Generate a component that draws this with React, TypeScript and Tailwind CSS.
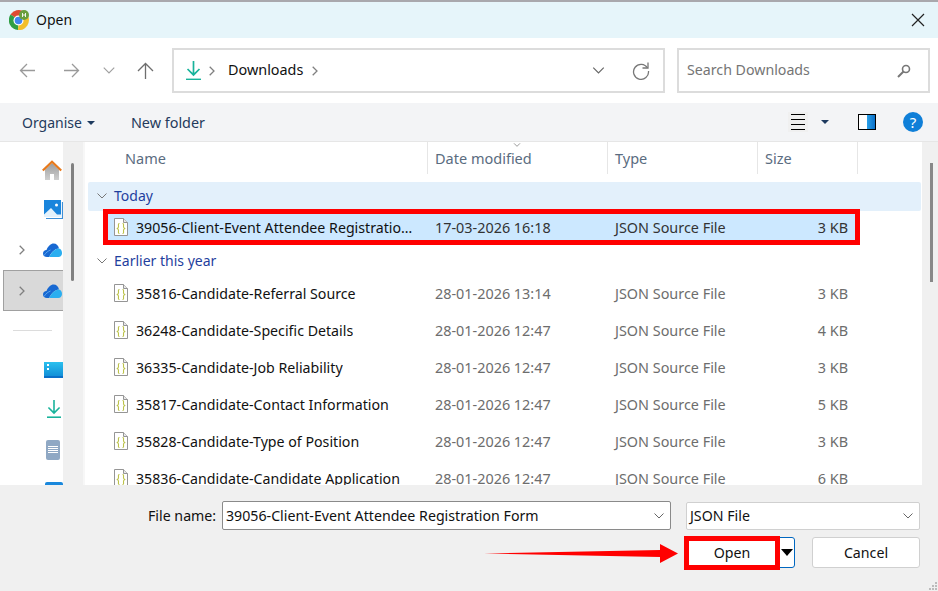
const files = [
  { name: '35816-Candidate-Referral Source', date: '28-01-2026 13:14', size: '3 KB' },
  { name: '36248-Candidate-Specific Details', date: '28-01-2026 12:47', size: '4 KB' },
  { name: '36335-Candidate-Job Reliability', date: '28-01-2026 12:47', size: '3 KB' },
  { name: '35817-Candidate-Contact Information', date: '28-01-2026 12:47', size: '5 KB' },
  { name: '35828-Candidate-Type of Position', date: '28-01-2026 12:47', size: '3 KB' },
  { name: '35836-Candidate-Candidate Application', date: '28-01-2026 12:47', size: '6 KB' },
]

const FileIcon = () => (
  <svg width="14" height="18" viewBox="0 0 14 18" className="shrink-0">
    <path d="M.5.5h9l4 4v13H.5z" fill="#fff" stroke="#959595" />
    <path d="M9.500.5v4h4" fill="#e8e8e8" stroke="#959595" />
    <path d="M5.500 5.500C4 5.500 4.500 7 4.500 8.500S4 10 3.300 10.500c.7.500 1.200.5 1.200 2s-.5 3 1 3M8.500 5.500c1.500 0 1 1.500 1 3s.5 1.500 1.200 2c-.7.500-1.200.5-1.200 2s.5 3-1 3" fill="none" stroke="#bcc24a" strokeWidth="1.100" />
  </svg>
)

const Chevron = ({ className }: { className: string }) => (
  <svg width="10" height="6" viewBox="0 0 10 6" className={className}>
    <path d="M.5.5 5 5 9.500.5" fill="none" stroke="currentColor" />
  </svg>
)

const ChevronRight = () => (
  <svg width="6" height="10" viewBox="0 0 6 10" className="text-[#808080]">
    <path d="M.7.7 5 5 .7 9.300" fill="none" stroke="currentColor" strokeWidth="1.300" />
  </svg>
)

const DownloadIcon = ({ size }: { size: number }) => (
  <svg width={size} height={size * 1.33} viewBox="0 0 15 20">
    <path d="M7.500 0v13M1.500 8l6 6 6-6" fill="none" stroke="#18b39b" strokeWidth="1.700" />
    <path d="M0 18.500h15" stroke="#18b39b" strokeWidth="1.700" />
  </svg>
)

const OneDrive = () => (
  <svg width="19" height="14" viewBox="0 0 19 14" className="shrink-0">
    <path d="M4 14C1.500 14 0 12.500 0 10.500 0 8.500 1.500 7 3.500 7 5 3 8 .5 10.500.5c3 0 5 2 5.500 5-4 0-7.500 4-10 8.500z" fill="#1768d2" />
    <path d="M6 14c2.500-4.500 6-8.500 10-8.500 1.800.300 3 2.500 3 4.500 0 2.300-1.500 4-3.500 4z" fill="#2aaef0" />
    <path d="M1 12.500C3 9.500 5 8 7.500 7" stroke="#6db5f2" strokeWidth=".8" fill="none" />
  </svg>
)

const ChromeIcon = () => (
  <svg width="20" height="20" viewBox="0 0 20 20" className="shrink-0">
    <path d="M10 10 1.500 4.500A10 10 0 0 1 18.500 5z" fill="#df4a32" />
    <path d="M10 10 1.500 4.500A10 10 0 0 0 9 20z" fill="#2f9e44" />
    <path d="M10 10 9 20A10 10 0 0 0 18.500 5z" fill="#f3bf2a" />
    <circle cx="9.500" cy="10.500" r="5" fill="#fff" />
    <circle cx="9.500" cy="10.500" r="3.800" fill="#3f86ee" />
    <circle cx="15" cy="5" r="5" fill="#6a9f3c" />
    <path d="M13.500 3v4M16.500 3v4M13.500 5h3" stroke="#fff" strokeWidth=".9" fill="none" />
  </svg>
)

export default function App() {
  return (
    <div className="relative flex h-[591px] w-[938px] flex-col overflow-hidden bg-white text-[14.2px] text-[#111] font-['Noto_Sans','Open_Sans',sans-serif]">
      {/* title bar */}
      <div className="flex h-[38px] shrink-0 items-center border-t-2 border-[#a9a8ad] bg-[#e6f5fa] pl-[9px] pr-[13px]">
        <ChromeIcon />
        <span className="ml-[7px] flex-1 text-[14px] leading-none">Open</span>
        <svg width="14" height="14" viewBox="0 0 14 14">
          <path d="M1 1l12 12M13 1 1 13" stroke="#222" strokeWidth="1.200" />
        </svg>
      </div>

      {/* nav bar */}
      <div className="flex h-[65px] shrink-0 items-center pl-[19px] pr-[8px]">
        <svg width="17" height="15" viewBox="0 0 17 15" className="text-[#9a9a9a]">
          <path d="M16 7.500H1.500M8 1 1.500 7.500 8 14" fill="none" stroke="currentColor" strokeWidth="1.300" />
        </svg>
        <svg width="17" height="15" viewBox="0 0 17 15" className="ml-[27px] text-[#9a9a9a]">
          <path d="M1 7.500h14.500M9 1l6.500 6.500L9 14" fill="none" stroke="currentColor" strokeWidth="1.300" />
        </svg>
        <Chevron className="ml-[23px] h-[7px] w-[12px] text-[#a0a0a0]" />
        <svg width="17" height="17" viewBox="0 0 17 17" className="ml-[22px] text-[#6e6e6e]">
          <path d="M8.500 17V1.500M1 9l7.500-7.500L16 9" fill="none" stroke="currentColor" strokeWidth="1.300" />
        </svg>
        <div className="ml-[18px] flex h-[45px] w-[493px] items-center border-2 border-[#dcdcdc] pl-[12px] pr-[13px]">
          <DownloadIcon size={15} />
          <span className="ml-[8px] text-[#777]"><ChevronRight /></span>
          <span className="ml-[13px] text-[14.4px] leading-none">Downloads</span>
          <span className="ml-[9px]"><ChevronRight /></span>
          <Chevron className="ml-auto h-[7px] w-[13px] text-[#666]" />
          <svg width="18" height="18" viewBox="0 0 18 18" className="ml-[27px] text-[#777]">
            <path d="M15.500 6A7.500 7.500 0 1 0 16.500 9" fill="none" stroke="currentColor" strokeWidth="1.300" />
            <path d="M16 .5v5.500h-5.500" fill="none" stroke="currentColor" strokeWidth="1.300" />
          </svg>
        </div>
        <div className="ml-[12px] flex h-[45px] w-[253px] items-center border-2 border-[#dcdcdc] pl-[8px] pr-[17px]">
          <span className="flex-1 text-[14.2px] leading-none text-[#757575]">Search Downloads</span>
          <svg width="14" height="14" viewBox="0 0 14 14">
            <circle cx="9" cy="5" r="3.500" fill="none" stroke="#777" strokeWidth="1.600" />
            <path d="M6.500 7.500 1 13" stroke="#777" strokeWidth="2" />
          </svg>
        </div>
      </div>

      {/* toolbar */}
      <div className="flex h-[39px] shrink-0 items-center border-b border-[#e6e6e6] bg-[#f3f4f6] pl-[22px] pr-[15px] pt-[2px] text-[14px] text-[#243a5c]">
        <span className="leading-none">Organise</span>
        <span className="ml-[5px] h-0 w-0 border-x-[4px] border-t-[4px] border-x-transparent border-t-[#1e3a5f]" />
        <span className="ml-[36px] text-[14.4px] leading-none">New folder</span>
        <div className="mb-[2px] ml-auto flex h-[20px] w-[20px] -translate-x-[2px] flex-col justify-center gap-[4px] bg-[#f0f0f0] px-[3px]">
          <div className="h-px bg-black" />
          <div className="h-px bg-black" />
          <div className="h-px bg-black" />
          <div className="h-px bg-black" />
        </div>
        <span className="mb-[2px] ml-[11px] h-0 w-0 border-x-[4px] border-t-[4px] border-x-transparent border-t-[#1e3a5f]" />
        <div className="mb-[2px] ml-[29px] flex h-[16px] w-[18px] border-[1.500px] border-black">
          <div className="w-1/2 bg-white" />
          <div className="w-1/2 bg-gradient-to-r from-[#2aa0e8] to-[#0a6fc8]" />
        </div>
        <div className="mb-[2px] ml-[27px] flex h-[20px] w-[20px] items-center justify-center rounded-full bg-[#0f7fd8] text-[15px] leading-none text-white">?</div>
      </div>

      {/* body */}
      <div className="flex min-h-0 flex-1">
        {/* nav pane */}
        <div className="flex w-[63px] shrink-0 flex-col overflow-hidden">
          <div className="mt-[18px] flex h-[20px] shrink-0 justify-end pr-px">
            <svg width="20" height="20" viewBox="0 0 20 20">
              <defs>
                <linearGradient id="homeFill" x1="0" y1="0" x2="0" y2="1">
                  <stop offset="0" stopColor="#9c9c9c" />
                  <stop offset="1" stopColor="#cfcfcf" />
                </linearGradient>
              </defs>
              <path d="M3 9.500V20h5v-6h4v6h5V9.500L10 3z" fill="url(#homeFill)" />
              <path d="M.8 10.500 10 1.800l9.200 8.700" fill="none" stroke="#e8791a" strokeWidth="2.200" />
            </svg>
          </div>
          <div className="mt-[20px] flex h-[20px] shrink-0 justify-end">
            <svg width="19" height="20" viewBox="0 0 19 20">
              <path d="M2 18.500h16.500V2" fill="none" stroke="#3d8fd8" strokeWidth="1.200" />
              <rect width="17" height="17" fill="#1a85dc" />
              <circle cx="12.500" cy="5" r="1.500" fill="#fff" />
              <path d="M0 14.500 7 8l6 6.500 4 0V17H0z" fill="#e4f2fc" />
            </svg>
          </div>
          <div className="mt-[23px] flex h-[14px] shrink-0 items-center justify-between pl-[19px] pr-px">
            <ChevronRight />
            <OneDrive />
          </div>
          <div className="ml-[3px] mt-[13px] flex h-[41px] shrink-0 items-center justify-between border border-r-0 border-[#a0a0a0] bg-[#d9d9d9] pl-[15px] pr-px">
            <ChevronRight />
            <OneDrive />
          </div>
          <div className="ml-[13px] mt-[19px] h-px w-[39px] shrink-0 bg-[#dcdcdc]" />
          <div className="mt-[31px] flex h-[16px] shrink-0 justify-end">
            <div className="w-[19px] border-b-2 border-[#0a6fc8] bg-gradient-to-b from-[#2bc0ee] to-[#1290d8] pl-[3px] pt-[2px]">
              <div className="h-[2px] w-[2px] bg-white" />
              <div className="mt-[2px] h-[2px] w-[2px] bg-white" />
            </div>
          </div>
          <div className="mt-[22px] flex h-[20px] shrink-0 justify-end pr-[2px]">
            <DownloadIcon size={14} />
          </div>
          <div className="mt-[20px] flex shrink-0 justify-end pr-[3px]">
            <div className="flex h-[20px] w-[14px] flex-col gap-px rounded-[2px] bg-[#8fa8c4] px-[2px] pt-[6px]">
              <div className="h-px bg-white" />
              <div className="h-px bg-white" />
              <div className="h-px bg-white" />
              <div className="h-px bg-white" />
            </div>
          </div>
          <div className="mt-[22px] flex shrink-0 justify-end">
            <div className="h-[6px] w-[18px] rounded-t-[2px] bg-[#1a88dc]" />
          </div>
        </div>
        <div className="w-[20px] shrink-0 bg-[#f0f0f0] pl-[8px] pt-[21px]">
          <div className="h-[118px] w-[3px] rounded-full bg-[#808080]" />
        </div>
        <div className="w-[2px] shrink-0 bg-[#f7f7f7]" />

        {/* file list */}
        <div className="min-w-0 flex-1 overflow-hidden">
          <div className="relative flex h-[32px] text-[14.500px] leading-none text-[#5a6c80]">
            <div className="flex w-[343px] items-center border-r border-[#e6e6e6] pl-[40px]">Name</div>
            <div className="flex w-[180px] items-center border-r border-[#e6e6e6] pl-[7px]">Date modified</div>
            <div className="flex w-[150px] items-center border-r border-[#e6e6e6] pl-[7px]">Type</div>
            <div className="flex w-[100px] items-center border-r border-[#e6e6e6] pl-[7px]">Size</div>
            <Chevron className="absolute left-[427px] top-px h-[4px] w-[10px] text-[#666]" />
          </div>
          <div className="ml-[3px] mr-px mt-[8px] flex h-[29px] items-center rounded-[2px] bg-[#e3f0fb] pb-[2px] pl-[9px] text-[#1f3f9e]">
            <Chevron className="text-[#777]" />
            <span className="ml-[7px] text-[14px] leading-none">Today</span>
          </div>
          <div className="relative ml-[18px] mt-[-2px] grid h-[36px] w-[757px] grid-cols-[319px_180px_150px_98px] items-center border-[5px] border-[#ff0000] bg-[#cce8ff] pt-px">
            <div className="flex min-w-0 items-center gap-[8px] pl-[6px]">
              <FileIcon />
              <span className="w-[277px] truncate">39056-Client-Event Attendee Registration Form</span>
            </div>
            <div className="pl-[8px] text-[14.4px] text-[#333]">17-03-2026 16:18</div>
            <div className="pl-[8px] text-[14.4px] text-[#333]">JSON Source File</div>
            <div className="pr-[7px] text-right text-[14.4px] text-[#333]">3 KB</div>
          </div>
          <div className="flex h-[30px] items-center pl-[12px] pt-[1px] text-[#1f3f9e]">
            <Chevron className="text-[#777]" />
            <span className="ml-[7px] text-[14px] leading-none">Earlier this year</span>
          </div>
          {files.map((f) => (
            <div key={f.name} className="ml-[23px] grid h-[37px] w-[747px] grid-cols-[319px_180px_150px_98px] items-center">
              <div className="flex min-w-0 items-center gap-[8px] pl-[6px]">
                <FileIcon />
                <span className="truncate">{f.name}</span>
              </div>
              <div className="pl-[8px] text-[14.4px] text-[#6d6d6d]">{f.date}</div>
              <div className="pl-[8px] text-[14.4px] text-[#6d6d6d]">JSON Source File</div>
              <div className="pr-[7px] text-right text-[14.4px] text-[#6d6d6d]">{f.size}</div>
            </div>
          ))}
        </div>
        <div className="w-[16px] shrink-0 bg-[#f0f0f0] pl-[8px] pt-[21px]">
          <div className="h-[119px] w-[3px] bg-[#888]" />
        </div>
      </div>

      {/* footer */}
      <div className="relative h-[106px] shrink-0 bg-[#f0f0f0] pl-[148px] pt-[16px]">
        <div className="flex items-center">
          <span className="w-[67px] whitespace-nowrap pt-px leading-none">File name:</span>
          <div className="ml-[7px] flex h-[29px] w-[449px] items-center rounded-[2px] border border-[#8a8a8a] bg-white pl-[3px] pr-[6px]">
            <span className="flex-1 pt-px leading-none">39056-Client-Event Attendee Registration Form</span>
            <Chevron className="text-[#666]" />
          </div>
          <div className="ml-[15px] flex h-[28px] w-[234px] items-center rounded-[2px] border border-[#d0d0d0] bg-white pl-[3px] pr-[6px]">
            <span className="flex-1 pt-px leading-none">JSON File</span>
            <Chevron className="text-[#666]" />
          </div>
        </div>
        <div className="ml-[538px] mt-[7px] flex items-center">
          <div className="flex h-[31px] w-[109px] items-center rounded-[3px] border border-[#0067c0] bg-white">
            <div className="z-10 -my-px -ml-[3px] flex h-[34px] w-[96px] shrink-0 items-center justify-center border-[5px] border-[#ff0000] bg-white pt-px leading-none">Open</div>
            <span className="ml-[1px] h-0 w-0 border-x-[6px] border-t-[7px] border-x-transparent border-t-black" />
          </div>
          <div className="ml-[17px] flex h-[31px] w-[108px] items-center justify-center rounded-[3px] border border-[#d0d0d0] bg-white pt-px leading-none">Cancel</div>
        </div>
        <div className="absolute bottom-[1px] right-[1px] grid grid-cols-3 gap-px">
          <span />
          <span />
          <span className="h-[2px] w-[2px] bg-[#bbb]" />
          <span />
          <span className="h-[2px] w-[2px] bg-[#bbb]" />
          <span className="h-[2px] w-[2px] bg-[#bbb]" />
          <span className="h-[2px] w-[2px] bg-[#bbb]" />
          <span className="h-[2px] w-[2px] bg-[#bbb]" />
          <span className="h-[2px] w-[2px] bg-[#bbb]" />
        </div>
      </div>

      {/* red annotation arrow */}
      <svg width="196" height="20" viewBox="0 0 196 20" className="absolute left-[484px] top-[544px]">
        <path d="M0 9.500 176 6V0l18 9.500L176 19v-6z" fill="#ff0000" />
      </svg>
    </div>
  )
}
